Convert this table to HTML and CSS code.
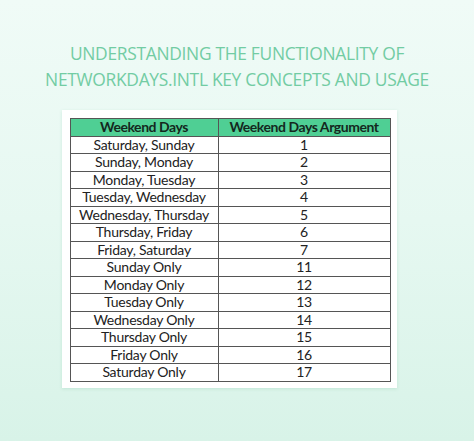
FILE: index.html
```html
<!DOCTYPE html>
<html>
<head>
<meta charset="utf-8">
<link rel="stylesheet" href="styles.css">
</head>
<body>
<div class="page">
  <h1 class="title">UNDERSTANDING THE FUNCTIONALITY OF<br>NETWORKDAYS.INTL KEY CONCEPTS AND USAGE</h1>
  <div class="card">
    <table class="grid">
      <thead>
        <tr><th class="c1">Weekend Days</th><th class="c2">Weekend Days Argument</th></tr>
      </thead>
      <tbody>
        <tr><td>Saturday, Sunday</td><td>1</td></tr>
        <tr><td>Sunday, Monday</td><td>2</td></tr>
        <tr><td>Monday, Tuesday</td><td>3</td></tr>
        <tr><td>Tuesday, Wednesday</td><td>4</td></tr>
        <tr><td>Wednesday, Thursday</td><td>5</td></tr>
        <tr><td>Thursday, Friday</td><td>6</td></tr>
        <tr><td>Friday, Saturday</td><td>7</td></tr>
        <tr><td>Sunday Only</td><td>11</td></tr>
        <tr><td>Monday Only</td><td>12</td></tr>
        <tr><td>Tuesday Only</td><td>13</td></tr>
        <tr><td>Wednesday Only</td><td>14</td></tr>
        <tr><td>Thursday Only</td><td>15</td></tr>
        <tr><td>Friday Only</td><td>16</td></tr>
        <tr><td>Saturday Only</td><td>17</td></tr>
      </tbody>
    </table>
  </div>
</div>
</body>
</html>
```
FILE: styles.css
```css
html, body {
  margin: 0;
  padding: 0;
}
body {
  width: 474px;
  height: 441px;
  overflow: hidden;
  background: linear-gradient(180deg, #f0fbf7 0%, #e6f8f1 50%, #d8f3e8 100%);
}
.page {
  display: flex;
  flex-direction: column;
  align-items: flex-start;
}
.title {
  margin: 40px 0 0 0;
  width: 474px;
  text-align: center;
  font-family: "Open Sans", sans-serif;
  font-weight: 400;
  font-size: 17.4px;
  line-height: 26px;
  color: #72cca3;
  letter-spacing: -0.3px;
}
.card {
  margin: 18px 0 0 62px;
  width: 335px;
  height: 278px;
  box-sizing: border-box;
  padding: 8px 0 0 7.5px;
  background: #ffffff;
  box-shadow: 0 1px 3px rgba(120, 190, 160, 0.25);
}
.grid {
  border-collapse: collapse;
  font-family: Lato, sans-serif;
  font-size: 14px;
  letter-spacing: -0.25px;
  color: #222;
  table-layout: fixed;
  width: 319px;
}
.grid th, .grid td {
  border: 1px solid #555;
  height: 16.5px;
  padding: 0;
  text-align: center;
  line-height: 16px;
}
.grid th {
  background: #4fcf94;
  font-weight: 700;
  letter-spacing: -0.45px;
  color: #14281e;
}
.c1 { width: 147px; }
.c2 { width: 171px; }
```
